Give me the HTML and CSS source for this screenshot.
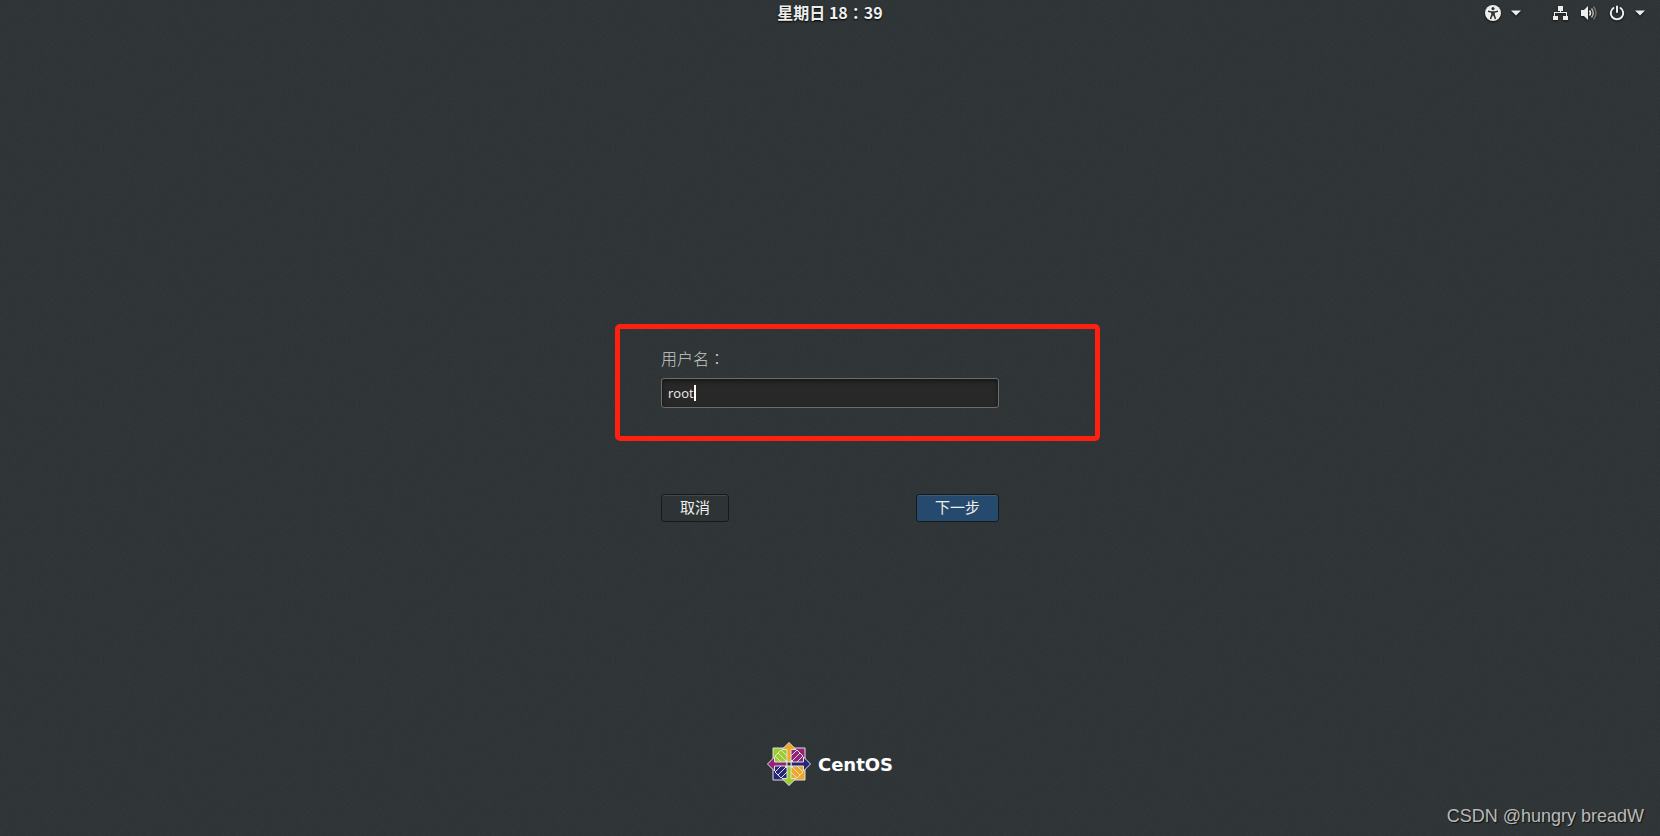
FILE: index.html
```html
<!DOCTYPE html>
<html lang="zh-CN">
<head>
  <meta charset="UTF-8">
  <meta name="viewport" content="width=device-width, initial-scale=1.0">
  <title>CentOS</title>
  <link rel="stylesheet" href="styles.css">
</head>
<body>

  <!-- Top bar -->
  <header class="top-bar">
    <time class="clock">星期日 18<span class="colon" lang="zh-TW">：</span>39</time>
    <div class="indicators">
      <button class="indicator" type="button" aria-label="辅助功能">
        <svg width="16" height="16" viewBox="0 0 16 16">
          <circle cx="8" cy="8" r="8" fill="#eeeeec"/>
          <circle cx="8" cy="3.6" r="1.6" fill="#2e3436"/>
          <path d="M3 5.6l3.4.6h3.2l3.4-.6v1.3l-3.2.8v1.8l1.4 4.2-1.3.5L8.3 10.4h-.6L6.1 14.2l-1.3-.5 1.4-4.2V7.7L3 6.9z" fill="#2e3436"/>
        </svg>
        <svg class="arrow" width="10" height="6" viewBox="0 0 10 6"><path d="M0 .5h10L5 5.5z" fill="#eeeeec"/></svg>
      </button>
      <button class="indicator" type="button" aria-label="系统">
        <svg width="16" height="16" viewBox="0 0 16 16" fill="#eeeeec">
          <path d="M5 1h5v5H8v1h6v4h1v4h-5v-4h3V8H2v3h3v4H0v-4h1V7h6V6H5z"/>
        </svg>
        <svg width="16" height="16" viewBox="0 0 16 16">
          <path d="M0 5h3l4-4v14l-4-4H0z" fill="#eeeeec"/>
          <g fill="none" stroke="#eeeeec" stroke-width="1.5">
            <path d="M8.5 5.5q2 2.5 0 5"/>
            <path d="M10.5 3.5q3.5 4.5 0 9" opacity=".7"/>
            <path d="M12.5 1.5q5 6.500 0 13" opacity=".35"/>
          </g>
        </svg>
        <svg width="16" height="16" viewBox="0 0 16 16" fill="none" stroke="#eeeeec" stroke-width="2" stroke-linecap="round">
          <path d="M4.5 3a6.2 6.2 0 1 0 7 0M8 1.5V7"/>
        </svg>
        <svg class="arrow" width="10" height="6" viewBox="0 0 10 6"><path d="M0 .5h10L5 5.5z" fill="#eeeeec"/></svg>
      </button>
    </div>
  </header>

  <!-- Login form -->
  <main class="login">
    <form class="login-form">
      <label for="username">用户名<span class="colon" lang="zh-TW">：</span></label>
      <div class="field">
        <input type="text" id="username" value="root" autocomplete="off" spellcheck="false">
        <span class="caret"></span>
      </div>
      <div class="button-group">
        <button class="cancel" type="button">取消</button>
        <button class="next" type="submit">下一步</button>
      </div>
      <div class="highlight"></div>
    </form>
  </main>

  <!-- Logo -->
  <footer class="logo">
    <svg width="44" height="44" viewBox="0 0 44 44" stroke="#dfe1e1" stroke-width="1">
      <path d="M6 6h16v16H6z" fill="#9ccd2a"/>
      <path d="M22 6h16v16H22z" fill="#932279"/>
      <path d="M6 22h16v16H6z" fill="#262577"/>
      <path d="M22 22h16v16H22z" fill="#efa724"/>
      <!-- diagonal bands -->
      <g fill="none">
        <path d="M14 8l-6 6 12 12M14 8l12 12M11 11l9 9"/>
        <path d="M30 8l6 6-12 12M30 8L18 20M33 11l-9 9"/>
        <path d="M14 36l-6-6 12-12M14 36l12-12M11 33l9-9"/>
        <path d="M30 36l6-6-12-12M30 36L18 24M33 33l-9-9"/>
      </g>
      <!-- arrows -->
      <path d="M22 .5l7 7h-5V20h-4V7.500h-5z" fill="#efa724"/>
      <path d="M43.500 22l-7 7v-5H24v-4h12.500v-5z" fill="#262577"/>
      <path d="M22 43.500l-7-7h5V24h4v12.500h5z" fill="#9ccd2a"/>
      <path d="M.5 22l7-7v5H20v4H7.500v5z" fill="#932279"/>
      <path d="M20 20h4v4h-4z" fill="#2e3436"/>
    </svg>
    <span>CentOS</span>
  </footer>

  <div class="watermark">CSDN @hungry breadW</div>

</body>
</html>
```

FILE: styles.css
```css
* {
  box-sizing: border-box;
}

body {
  margin: 0;
  min-height: 100vh;
  display: flex;
  flex-direction: column;
  font-family: "Open Sans", "Noto Sans CJK SC", sans-serif;
  color: #eeeeec;
  background-color: #2a3032;
  background-image: url("data:image/svg+xml,%3Csvg xmlns='http://www.w3.org/2000/svg' width='256' height='256'%3E%3Cfilter id='n'%3E%3CfeTurbulence type='fractalNoise' baseFrequency='.8' numOctaves='2' stitchTiles='stitch'/%3E%3CfeColorMatrix type='saturate' values='0'/%3E%3C/filter%3E%3Crect width='256' height='256' filter='url(%23n)' opacity='.07'/%3E%3C/svg%3E");
}

button,
input {
  font-family: inherit;
  color: inherit;
}

.top-bar {
  display: grid;
  grid-template-columns: 1fr auto 1fr;
  align-items: center;
  height: 26px;
  padding: 0 15px;
}

.clock {
  grid-column: 2;
  padding-bottom: 2px;
  font-family: "Noto Sans CJK SC", sans-serif;
  font-size: 16px;
  line-height: 24px;
  font-weight: bold;
  text-shadow: 0 1px 2px #000;
}

/* Full-width colon, centred in its box */
.colon {
  font-family: "Noto Sans CJK TC", sans-serif;
}

.indicators {
  display: flex;
  justify-content: flex-end;
  gap: 32px;
}

.indicator {
  display: flex;
  align-items: center;
  gap: 12px;
  padding: 0;
  border: none;
  background: none;
  filter: drop-shadow(0 1px 1px #111);
}

.indicator .arrow {
  margin-left: -2px;
}

.login {
  flex: 1;
  display: flex;
  align-items: center;
  justify-content: center;
  padding-top: 104px;
}

.login-form {
  position: relative;
  width: 338px;
}

.login-form label {
  display: block;
  font-family: "Noto Sans CJK SC", sans-serif;
  font-size: 16px;
  font-weight: 300;
  line-height: 16px;
  color: #c8cac4;
}

.field {
  position: relative;
  margin-top: 12px;
}

.field input {
  display: block;
  width: 100%;
  height: 30px;
  padding: 0 6px;
  font-size: 13px;
  border: 1px solid #6b6f68;
  border-radius: 3px;
  outline: none;
  background-color: #282828;
  box-shadow: inset 0 2px 4px rgba(0, 0, 0, 0.5);
}

.caret {
  position: absolute;
  left: 33px;
  top: 7px;
  width: 2px;
  height: 16px;
  background-color: #fff;
}

.button-group {
  display: flex;
  justify-content: space-between;
  margin-top: 86px;
}

.button-group button {
  height: 28px;
  padding: 0 18px 2px;
  font-family: "Noto Sans CJK SC", sans-serif;
  font-size: 15px;
  line-height: 24px;
  border: 1px solid #15191a;
  border-radius: 3px;
  box-shadow: inset 0 1px rgba(255, 255, 255, 0.1);
}

.button-group .cancel {
  background-color: #2e3436;
}

.button-group .next {
  background-color: #264a6e;
}

/* Red frame over the user name field */
.highlight {
  position: absolute;
  left: -46px;
  top: -26px;
  width: 485px;
  height: 117px;
  border: 5px solid #ff2012;
  border-radius: 5px;
  pointer-events: none;
}

.logo {
  display: flex;
  align-items: center;
  justify-content: center;
  gap: 7px;
  padding-bottom: 50px;
  font-family: "DejaVu Sans", sans-serif;
  font-size: 18px;
  font-weight: bold;
  color: #fff;
}

.watermark {
  position: absolute;
  right: 16px;
  bottom: 8px;
  font-family: "Liberation Sans", sans-serif;
  font-size: 18px;
  line-height: 24px;
  color: #b9bbbb;
  text-shadow: 1px 1px 1px #111;
}
```
